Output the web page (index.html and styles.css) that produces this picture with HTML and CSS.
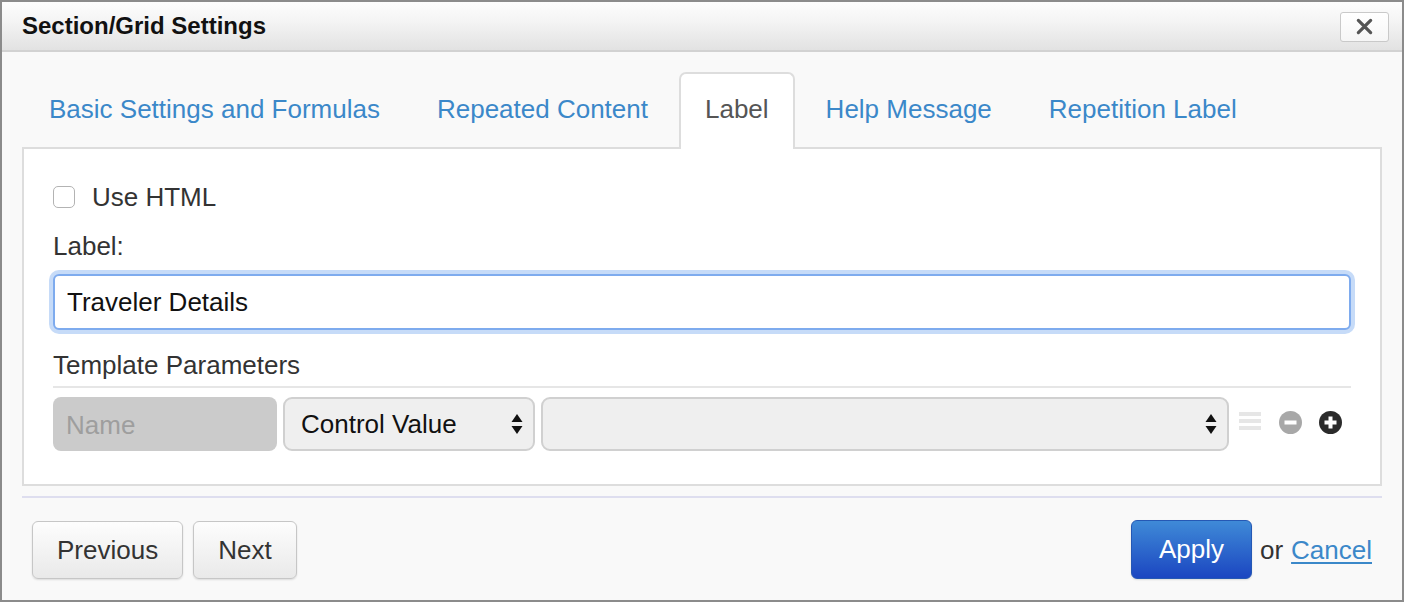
FILE: index.html
```html
<!DOCTYPE html>
<html lang="en">
<head>
<meta charset="utf-8">
<title>Section/Grid Settings</title>
<link rel="stylesheet" href="styles.css">
</head>
<body>
<div class="dialog">
  <div class="dialog-header">
    <h1 class="dialog-title">Section/Grid Settings</h1>
    <button class="close-btn" type="button" aria-label="Close">
      <svg width="17" height="17" viewBox="0 0 18 18"><path d="M2.5 2.5 L15.5 15.5 M15.5 2.5 L2.5 15.5" stroke="#555" stroke-width="3.4" stroke-linecap="round" fill="none"/></svg>
    </button>
  </div>
  <div class="dialog-body">
    <ul class="tabs">
      <li class="tab"><a>Basic Settings and Formulas</a></li>
      <li class="tab"><a>Repeated Content</a></li>
      <li class="tab active"><a>Label</a></li>
      <li class="tab"><a>Help Message</a></li>
      <li class="tab"><a>Repetition Label</a></li>
    </ul>
    <div class="tab-panel">
      <label class="check-row"><span class="checkbox"></span>Use HTML</label>
      <div class="field-label">Label:</div>
      <input class="text-input" type="text" value="Traveler Details">
      <div class="section-title">Template Parameters</div>
      <div class="param-row">
        <div class="name-input">Name</div>
        <div class="select select-type">
          <span class="select-text">Control Value</span>
          <svg class="select-arrows" width="12" height="22" viewBox="0 0 12 22"><path d="M6 1 L11.5 9 L0.5 9 Z M0.5 13 L11.5 13 L6 21 Z" fill="#111"/></svg>
        </div>
        <div class="select select-value">
          <span class="select-text"></span>
          <svg class="select-arrows" width="12" height="22" viewBox="0 0 12 22"><path d="M6 1 L11.5 9 L0.5 9 Z M0.5 13 L11.5 13 L6 21 Z" fill="#111"/></svg>
        </div>
        <div class="row-icons">
          <svg class="icon-drag" width="22" height="18" viewBox="0 0 22 18"><rect x="0" y="0" width="22" height="4" fill="#e6e6e6"/><rect x="0" y="7" width="22" height="4" fill="#e6e6e6"/><rect x="0" y="14" width="22" height="4" fill="#e6e6e6"/></svg>
          <svg class="icon-minus" width="23" height="23" viewBox="0 0 23 23"><circle cx="11.5" cy="11.5" r="11.5" fill="#a8a8a8"/><rect x="5.5" y="9.5" width="12" height="4" fill="#fff"/></svg>
          <svg class="icon-plus" width="23" height="23" viewBox="0 0 23 23"><circle cx="11.5" cy="11.5" r="11.5" fill="#2b2b2b"/><rect x="5.5" y="9.5" width="12" height="4" fill="#fff"/><rect x="9.5" y="5.5" width="4" height="12" fill="#fff"/></svg>
        </div>
      </div>
    </div>
    <div class="dialog-footer">
      <div class="nav-buttons">
        <button class="btn" type="button">Previous</button>
        <button class="btn" type="button">Next</button>
      </div>
      <div class="actions">
        <button class="btn btn-primary" type="button">Apply</button>
        <span class="or">or</span>
        <a class="cancel-link">Cancel</a>
      </div>
    </div>
  </div>
</div>
</body>
</html>
```
FILE: styles.css
```css
* { box-sizing: border-box; }

html, body {
  margin: 0;
  padding: 0;
  background: #ffffff;
}

body {
  font-family: "Liberation Sans", Arial, Helvetica, sans-serif;
  font-size: 26px;
  color: #333;
}

.dialog {
  width: 1404px;
  height: 602px;
  border: 2px solid #8b8b8b;
  background: #f9f9f9;
  display: flex;
  flex-direction: column;
}

.dialog-header {
  height: 50px;
  border-bottom: 2px solid #d2d2d2;
  background: linear-gradient(#fdfdfd, #f4f4f4 40%, #e2e2e2);
  display: flex;
  align-items: center;
  justify-content: space-between;
  padding: 0 13px 0 20px;
}

.dialog-title {
  margin: 0;
  font-size: 24px;
  font-weight: bold;
  color: #111;
}

.close-btn {
  width: 49px;
  height: 30px;
  margin-top: 1px;
  border: 1px solid #c9c9c9;
  border-radius: 3px;
  background: linear-gradient(#ffffff, #f6f6f6);
  display: flex;
  align-items: center;
  justify-content: center;
  padding: 0;
}

.dialog-body {
  padding: 0 20px;
}

.tabs {
  list-style: none;
  margin: 20px 0 0;
  padding: 0 0 0 1px;
  display: flex;
  align-items: flex-end;
}

.tab {
  margin-right: 5px;
}

.tab a {
  display: flex;
  align-items: center;
  height: 75px;
  padding: 0 24px 3px;
  border: 2px solid transparent;
  border-bottom: none;
  border-radius: 7px 7px 0 0;
  color: #3b88c9;
  font-size: 26px;
  line-height: 1;
}

.tab.active a {
  height: 77px;
  margin-bottom: -2px;
  padding-bottom: 5px;
  background: #fff;
  border-color: #dddddd;
  color: #555;
  position: relative;
  z-index: 1;
}

.tab-panel {
  border: 2px solid #dddddd;
  background: #fff;
  padding: 30px 29px 33px;
}

.check-row {
  display: flex;
  align-items: center;
  height: 36px;
  color: #333;
}

.checkbox {
  width: 22px;
  height: 22px;
  border: 1.5px solid #b3b3b3;
  border-radius: 5px;
  background: #fff;
  margin-right: 17px;
}

.field-label {
  margin-top: 14px;
  height: 34px;
  line-height: 34px;
  color: #333;
}

.text-input {
  display: block;
  width: 100%;
  margin: 11px 0 0;
  height: 56px;
  padding: 0 12px;
  border: 2px solid #7eabee;
  border-radius: 6px;
  box-shadow: 0 0 0 4px #c6dbf8;
  font-family: inherit;
  font-size: 26px;
  color: #111;
  background: #fff;
  outline: none;
}

.section-title {
  margin-top: 20px;
  line-height: 30px;
  padding-bottom: 6px;
  border-bottom: 2px solid #e6e6e6;
  color: #333;
}

.param-row {
  margin-top: 9px;
  display: flex;
  align-items: center;
  gap: 6px;
}

.name-input {
  width: 224px;
  height: 54px;
  border-radius: 8px;
  background: #cbcbcb;
  color: #9e9e9e;
  padding: 0 13px;
  display: flex;
  align-items: center;
  padding-top: 3px;
}

.select {
  height: 54px;
  border: 2px solid #d0d0d0;
  border-radius: 9px;
  background: #efefef;
  display: flex;
  align-items: center;
  justify-content: space-between;
  padding: 0 10px 0 16px;
  color: #111;
}

.select-type {
  width: 252px;
}

.select-value {
  flex: 1;
}

.row-icons {
  display: flex;
  align-items: center;
  margin-left: 4px;
  margin-right: 9px;
  padding-bottom: 4px;
}

.icon-drag {
  margin-right: 18px;
  margin-top: -2px;
}

.icon-minus {
  margin-right: 17px;
}

.dialog-footer {
  margin-top: 10px;
  border-top: 2px solid #dedeef;
  padding: 23px 10px 0;
  display: flex;
  justify-content: space-between;
  align-items: center;
}

.nav-buttons {
  display: flex;
  gap: 10px;
}

.btn {
  height: 58px;
  padding: 0 24px;
  border: 1px solid #c6c6c6;
  border-radius: 6px;
  background: linear-gradient(#fdfdfd, #e9e9e9);
  box-shadow: 0 1px 2px rgba(0,0,0,0.12);
  font-family: inherit;
  font-size: 26px;
  color: #333;
}

.actions {
  display: flex;
  align-items: center;
}

.btn-primary {
  padding: 0 27px;
  height: 59px;
  margin-top: -1px;
  border: 1px solid #2558b4;
  background: linear-gradient(#3f8ad7, #1b46c1);
  color: #fff;
}

.or {
  margin: 0 8px;
  color: #333;
}

.cancel-link {
  color: #3b88c9;
  text-decoration: underline;
  text-underline-offset: 3px;
}
```
